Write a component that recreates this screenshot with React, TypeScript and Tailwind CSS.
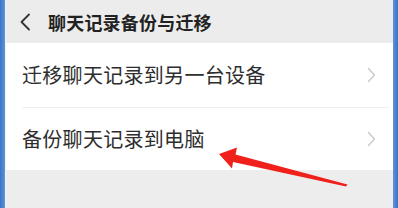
import React from 'react';

const ROWS = [
  { title: '迁移聊天记录到另一台设备', h: 'h-[65px]', divider: true },
  { title: '备份聊天记录到电脑', h: 'h-[62px]', divider: false },
];

function Chevron() {
  return (
    <svg width="9" height="16" viewBox="0 0 9 16" className="shrink-0">
      <path d="M1.5 1.5 L7.5 8 L1.5 14.5" fill="none" stroke="#c8c8c8" strokeWidth="1.4" strokeLinecap="round" strokeLinejoin="round" />
    </svg>
  );
}

export default function App() {
  return (
    <div
      className="relative flex w-[398px] h-[208px] overflow-hidden bg-[#ededed]"
      style={{ fontFamily: '"Noto Sans CJK SC", "Noto Sans", sans-serif' }}
    >
      <div className="w-[5px] bg-gradient-to-r from-[#3b74c4] to-[#5b93dc]" />
      <div className="w-px bg-[#f3f5f7]" />
      <div className="flex-1 flex flex-col">
        <div className="h-[43px] bg-[#ececec] flex items-center pl-[13px]">
          <svg width="12" height="18" viewBox="0 0 12 18" className="shrink-0">
            <path d="M10 1.5 L2.5 9 L10 16.5" fill="none" stroke="#333" strokeWidth="1.8" strokeLinecap="round" strokeLinejoin="round" />
          </svg>
          <span className="ml-[17px] text-[18px] font-bold text-[#222] leading-none tracking-[0.2px]">聊天记录备份与迁移</span>
        </div>
        {ROWS.map((r) => (
          <div key={r.title} className={`${r.h} bg-white flex flex-col`}>
            <div className="flex-1 flex items-center pl-[16px] pr-[17px]">
              <span className="flex-1 text-[20px] text-[#2e2e2e] leading-none tracking-[0.3px]">{r.title}</span>
              <Chevron />
            </div>
            {r.divider && <div className="h-px bg-[#efefef] ml-[16px] mr-[4px]" />}
          </div>
        ))}
        <div className="flex-1 bg-[#ededed]" />
      </div>
      <div className="w-[5px] bg-gradient-to-r from-[#5b93dc] to-[#3b74c4]" />

      {/* red annotation arrow */}
      <svg className="absolute left-0 top-0" width="398" height="208" viewBox="0 0 398 208">
        <path d="M219 154 L237 147.5 L235.5 154.5 L347.5 184.5 L346 186.5 L233 162 L232 168.5 Z" fill="#f0201a" />
      </svg>
    </div>
  );
}
